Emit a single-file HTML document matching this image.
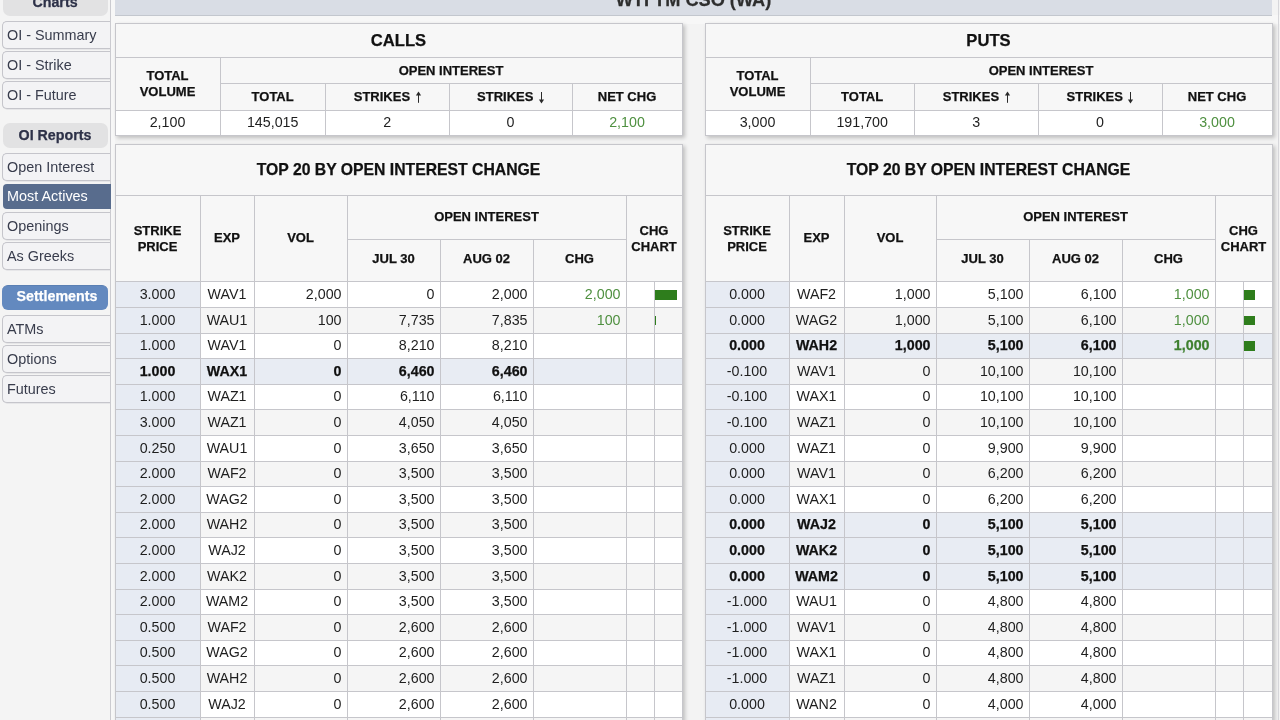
<!DOCTYPE html><html><head><meta charset="utf-8"><style>*{margin:0;padding:0;box-sizing:border-box}
html,body{width:1280px;height:720px;overflow:hidden;background:#f3f3f3;font-family:"Liberation Sans",sans-serif;color:#1e1e1e;position:relative}
body>div{position:absolute}
.t{display:flex;align-items:center;white-space:nowrap;line-height:1}
#w{position:absolute;left:0;top:0;width:1280px;height:720px;will-change:transform}
#w>div{position:absolute}
</style></head><body><div id="w">
<div style="left:0px;top:0px;width:110px;height:720px;background:#f4f4f4"></div>
<div style="left:111px;top:0px;width:4px;height:720px;background:#f7f7f7"></div>
<div style="left:110px;top:0px;width:1px;height:720px;background:#cbcbd0"></div>
<div style="left:2.5px;top:-14px;width:105px;height:30px;background:#e2e2e3;border-radius:7px"></div>
<div class="t" style="left:2.5px;top:-14px;width:105.0px;height:30px;font-size:14.25px;font-weight:bold;-webkit-text-stroke:0.25px currentColor;color:#2d3148;justify-content:center;align-items:flex-end;padding-bottom:7px;">Charts</div>
<div style="left:2px;top:21px;width:108px;height:28px;background:#f3f3f5;border:1px solid #c5c5cb;border-right:none;border-radius:5px 0 0 5px;box-shadow:0 0.5px 0 #d8d8dc"></div>
<div class="t" style="left:7px;top:21px;width:103px;height:27.5px;font-size:14.4px;color:#383c4c;justify-content:flex-start;">OI - Summary</div>
<div style="left:2px;top:51px;width:108px;height:28px;background:#f3f3f5;border:1px solid #c5c5cb;border-right:none;border-radius:5px 0 0 5px;box-shadow:0 0.5px 0 #d8d8dc"></div>
<div class="t" style="left:7px;top:51px;width:103px;height:27.5px;font-size:14.4px;color:#383c4c;justify-content:flex-start;">OI - Strike</div>
<div style="left:2px;top:81px;width:108px;height:28px;background:#f3f3f5;border:1px solid #c5c5cb;border-right:none;border-radius:5px 0 0 5px;box-shadow:0 0.5px 0 #d8d8dc"></div>
<div class="t" style="left:7px;top:81px;width:103px;height:27.5px;font-size:14.4px;color:#383c4c;justify-content:flex-start;">OI - Future</div>
<div style="left:2.5px;top:123px;width:105px;height:24.5px;background:#e2e2e3;border-radius:7px"></div>
<div class="t" style="left:2.5px;top:122.5px;width:105.0px;height:24.5px;font-size:14.25px;font-weight:bold;-webkit-text-stroke:0.25px currentColor;color:#2d3148;justify-content:center;">OI Reports</div>
<div style="left:2px;top:153px;width:108px;height:28px;background:#f3f3f5;border:1px solid #c5c5cb;border-right:none;border-radius:5px 0 0 5px;box-shadow:0 0.5px 0 #d8d8dc"></div>
<div class="t" style="left:7px;top:153px;width:103px;height:27.5px;font-size:14.4px;color:#383c4c;justify-content:flex-start;">Open Interest</div>
<div style="left:2px;top:212px;width:108px;height:28px;background:#f3f3f5;border:1px solid #c5c5cb;border-right:none;border-radius:5px 0 0 5px;box-shadow:0 0.5px 0 #d8d8dc"></div>
<div class="t" style="left:7px;top:212px;width:103px;height:27.5px;font-size:14.4px;color:#383c4c;justify-content:flex-start;">Openings</div>
<div style="left:2px;top:242px;width:108px;height:28px;background:#f3f3f5;border:1px solid #c5c5cb;border-right:none;border-radius:5px 0 0 5px;box-shadow:0 0.5px 0 #d8d8dc"></div>
<div class="t" style="left:7px;top:242px;width:103px;height:27.5px;font-size:14.4px;color:#383c4c;justify-content:flex-start;">As Greeks</div>
<div style="left:3px;top:184px;width:108px;height:25px;background:#586c8d;border-radius:4px 0 0 4px"></div>
<div class="t" style="left:7px;top:184px;width:104px;height:25px;font-size:14.4px;color:#ffffff;justify-content:flex-start;">Most Actives</div>
<div style="left:2px;top:284.5px;width:106px;height:25.5px;background:#6389bf;border-radius:6px;border-top:1px solid #5a7fb3"></div>
<div class="t" style="left:4px;top:283.7px;width:106px;height:25.5px;font-size:14.25px;font-weight:bold;-webkit-text-stroke:0.25px currentColor;color:#ffffff;justify-content:center;">Settlements</div>
<div style="left:2px;top:315px;width:108px;height:28px;background:#f3f3f5;border:1px solid #c5c5cb;border-right:none;border-radius:5px 0 0 5px;box-shadow:0 0.5px 0 #d8d8dc"></div>
<div class="t" style="left:7px;top:315px;width:103px;height:27.5px;font-size:14.4px;color:#383c4c;justify-content:flex-start;">ATMs</div>
<div style="left:2px;top:345px;width:108px;height:28px;background:#f3f3f5;border:1px solid #c5c5cb;border-right:none;border-radius:5px 0 0 5px;box-shadow:0 0.5px 0 #d8d8dc"></div>
<div class="t" style="left:7px;top:345px;width:103px;height:27.5px;font-size:14.4px;color:#383c4c;justify-content:flex-start;">Options</div>
<div style="left:2px;top:375px;width:108px;height:28px;background:#f3f3f5;border:1px solid #c5c5cb;border-right:none;border-radius:5px 0 0 5px;box-shadow:0 0.5px 0 #d8d8dc"></div>
<div class="t" style="left:7px;top:375px;width:103px;height:27.5px;font-size:14.4px;color:#383c4c;justify-content:flex-start;">Futures</div>
<div style="left:111px;top:15px;width:1169px;height:8.5px;background:#f7f7f7"></div>
<div style="left:115px;top:-20px;width:1157px;height:35.5px;background:#d9dde5;border-bottom:1px solid #c3c7ce"></div>
<div class="t" style="left:115px;top:-20px;width:1157px;height:34.5px;font-size:18.2px;font-weight:bold;-webkit-text-stroke:0.25px currentColor;color:#2e2e2e;justify-content:center;align-items:flex-end;padding-bottom:5px;">WTI TM CSO (WA)</div>
<div style="left:115px;top:23px;width:568px;height:113px;background:#f7f7f7;border:1px solid #c6c6cb;box-shadow:2px 2px 4px rgba(0,0,0,0.22)"></div>
<div style="left:116px;top:111px;width:566px;height:24px;background:#fff"></div>
<div style="left:115px;top:57px;width:567px;height:1px;background:#c6c6cb"></div>
<div style="left:220px;top:83.2px;width:462px;height:1px;background:#c6c6cb"></div>
<div style="left:115px;top:110px;width:567px;height:1px;background:#c6c6cb"></div>
<div style="left:220px;top:57px;width:1px;height:78px;background:#c6c6cb"></div>
<div style="left:325.3px;top:83.2px;width:1px;height:51.8px;background:#c6c6cb"></div>
<div style="left:449px;top:83.2px;width:1px;height:51.8px;background:#c6c6cb"></div>
<div style="left:572px;top:83.2px;width:1px;height:51.8px;background:#c6c6cb"></div>
<div class="t" style="left:115px;top:25px;width:567px;height:33px;font-size:16.6px;font-weight:bold;-webkit-text-stroke:0.25px currentColor;color:#111;justify-content:center;">CALLS</div>
<div class="t" style="left:115px;top:57px;width:105px;height:53px;font-size:13px;font-weight:bold;-webkit-text-stroke:0.25px currentColor;color:#111;justify-content:center;line-height:16px;text-align:center;">TOTAL<br>VOLUME</div>
<div class="t" style="left:220px;top:57.3px;width:462px;height:26.200000000000003px;font-size:13px;font-weight:bold;-webkit-text-stroke:0.25px currentColor;color:#111;justify-content:center;">OPEN INTEREST</div>
<div class="t" style="left:220px;top:83.0px;width:105.30000000000001px;height:26.799999999999997px;font-size:13px;font-weight:bold;-webkit-text-stroke:0.25px currentColor;color:#111;justify-content:center;">TOTAL</div>
<div class="t" style="left:325.3px;top:83.0px;width:123.69999999999999px;height:26.799999999999997px;font-size:13px;font-weight:bold;-webkit-text-stroke:0.25px currentColor;color:#111;justify-content:center;">STRIKES<svg width="5" height="12" viewBox="0 0 5 12" style="margin-left:5.5px;margin-top:2px;overflow:visible"><path d="M2.5 11.8V2" stroke="#2a2a2a" stroke-width="1" fill="none"/><path d="M-0.1 4.6L2.5 0.5L5.1 4.6Z" fill="#2a2a2a"/></svg></div>
<div class="t" style="left:449px;top:83.0px;width:123px;height:26.799999999999997px;font-size:13px;font-weight:bold;-webkit-text-stroke:0.25px currentColor;color:#111;justify-content:center;">STRIKES<svg width="5" height="12" viewBox="0 0 5 12" style="margin-left:5.5px;margin-top:2.5px;overflow:visible"><path d="M2.5 0V9.5" stroke="#2a2a2a" stroke-width="1" fill="none"/><path d="M-0.1 7.4L2.5 11.5L5.1 7.4Z" fill="#2a2a2a"/></svg></div>
<div class="t" style="left:572px;top:83.0px;width:110px;height:26.799999999999997px;font-size:13px;font-weight:bold;-webkit-text-stroke:0.25px currentColor;color:#111;justify-content:center;">NET CHG</div>
<div class="t" style="left:115px;top:110px;width:105px;height:25px;font-size:14.25px;color:#1e1e1e;justify-content:center;">2,100</div>
<div class="t" style="left:220px;top:110px;width:105.30000000000001px;height:25px;font-size:14.25px;color:#1e1e1e;justify-content:center;">145,015</div>
<div class="t" style="left:325.3px;top:110px;width:123.69999999999999px;height:25px;font-size:14.25px;color:#1e1e1e;justify-content:center;">2</div>
<div class="t" style="left:449px;top:110px;width:123px;height:25px;font-size:14.25px;color:#1e1e1e;justify-content:center;">0</div>
<div class="t" style="left:572px;top:110px;width:110px;height:25px;font-size:14.25px;color:#4f9040;justify-content:center;">2,100</div>
<div style="left:705px;top:23px;width:568px;height:113px;background:#f7f7f7;border:1px solid #c6c6cb;box-shadow:2px 2px 4px rgba(0,0,0,0.22)"></div>
<div style="left:706px;top:111px;width:566px;height:24px;background:#fff"></div>
<div style="left:705px;top:57px;width:567px;height:1px;background:#c6c6cb"></div>
<div style="left:810px;top:83.2px;width:462px;height:1px;background:#c6c6cb"></div>
<div style="left:705px;top:110px;width:567px;height:1px;background:#c6c6cb"></div>
<div style="left:810px;top:57px;width:1px;height:78px;background:#c6c6cb"></div>
<div style="left:914.3px;top:83.2px;width:1px;height:51.8px;background:#c6c6cb"></div>
<div style="left:1038px;top:83.2px;width:1px;height:51.8px;background:#c6c6cb"></div>
<div style="left:1162px;top:83.2px;width:1px;height:51.8px;background:#c6c6cb"></div>
<div class="t" style="left:705px;top:25px;width:567px;height:33px;font-size:16.6px;font-weight:bold;-webkit-text-stroke:0.25px currentColor;color:#111;justify-content:center;">PUTS</div>
<div class="t" style="left:705px;top:57px;width:105px;height:53px;font-size:13px;font-weight:bold;-webkit-text-stroke:0.25px currentColor;color:#111;justify-content:center;line-height:16px;text-align:center;">TOTAL<br>VOLUME</div>
<div class="t" style="left:810px;top:57.3px;width:462px;height:26.200000000000003px;font-size:13px;font-weight:bold;-webkit-text-stroke:0.25px currentColor;color:#111;justify-content:center;">OPEN INTEREST</div>
<div class="t" style="left:810px;top:83.0px;width:104.29999999999995px;height:26.799999999999997px;font-size:13px;font-weight:bold;-webkit-text-stroke:0.25px currentColor;color:#111;justify-content:center;">TOTAL</div>
<div class="t" style="left:914.3px;top:83.0px;width:123.70000000000005px;height:26.799999999999997px;font-size:13px;font-weight:bold;-webkit-text-stroke:0.25px currentColor;color:#111;justify-content:center;">STRIKES<svg width="5" height="12" viewBox="0 0 5 12" style="margin-left:5.5px;margin-top:2px;overflow:visible"><path d="M2.5 11.8V2" stroke="#2a2a2a" stroke-width="1" fill="none"/><path d="M-0.1 4.6L2.5 0.5L5.1 4.6Z" fill="#2a2a2a"/></svg></div>
<div class="t" style="left:1038px;top:83.0px;width:124px;height:26.799999999999997px;font-size:13px;font-weight:bold;-webkit-text-stroke:0.25px currentColor;color:#111;justify-content:center;">STRIKES<svg width="5" height="12" viewBox="0 0 5 12" style="margin-left:5.5px;margin-top:2.5px;overflow:visible"><path d="M2.5 0V9.5" stroke="#2a2a2a" stroke-width="1" fill="none"/><path d="M-0.1 7.4L2.5 11.5L5.1 7.4Z" fill="#2a2a2a"/></svg></div>
<div class="t" style="left:1162px;top:83.0px;width:110px;height:26.799999999999997px;font-size:13px;font-weight:bold;-webkit-text-stroke:0.25px currentColor;color:#111;justify-content:center;">NET CHG</div>
<div class="t" style="left:705px;top:110px;width:105px;height:25px;font-size:14.25px;color:#1e1e1e;justify-content:center;">3,000</div>
<div class="t" style="left:810px;top:110px;width:104.29999999999995px;height:25px;font-size:14.25px;color:#1e1e1e;justify-content:center;">191,700</div>
<div class="t" style="left:914.3px;top:110px;width:123.70000000000005px;height:25px;font-size:14.25px;color:#1e1e1e;justify-content:center;">3</div>
<div class="t" style="left:1038px;top:110px;width:124px;height:25px;font-size:14.25px;color:#1e1e1e;justify-content:center;">0</div>
<div class="t" style="left:1162px;top:110px;width:110px;height:25px;font-size:14.25px;color:#4f9040;justify-content:center;">3,000</div>
<div style="left:115px;top:144px;width:568px;height:596px;background:#f7f7f7;border:1px solid #c6c6cb;box-shadow:2px 2px 4px rgba(0,0,0,0.22)"></div>
<div style="left:116px;top:281.4px;width:566px;height:25.600000000000023px;background:#ffffff"></div>
<div style="left:116px;top:281.4px;width:84px;height:25.600000000000023px;background:#e7ebf3"></div>
<div style="left:116px;top:307.0px;width:566px;height:25.599999999999966px;background:#f5f5f5"></div>
<div style="left:116px;top:307.0px;width:84px;height:25.599999999999966px;background:#e7ebf3"></div>
<div style="left:116px;top:332.59999999999997px;width:566px;height:25.600000000000023px;background:#ffffff"></div>
<div style="left:116px;top:332.59999999999997px;width:84px;height:25.600000000000023px;background:#e7ebf3"></div>
<div style="left:116px;top:358.2px;width:566px;height:25.599999999999966px;background:#e8ecf3"></div>
<div style="left:116px;top:383.79999999999995px;width:566px;height:25.600000000000023px;background:#ffffff"></div>
<div style="left:116px;top:383.79999999999995px;width:84px;height:25.600000000000023px;background:#e7ebf3"></div>
<div style="left:116px;top:409.4px;width:566px;height:25.600000000000023px;background:#f5f5f5"></div>
<div style="left:116px;top:409.4px;width:84px;height:25.600000000000023px;background:#e7ebf3"></div>
<div style="left:116px;top:435.0px;width:566px;height:25.600000000000023px;background:#ffffff"></div>
<div style="left:116px;top:435.0px;width:84px;height:25.600000000000023px;background:#e7ebf3"></div>
<div style="left:116px;top:460.6px;width:566px;height:25.599999999999966px;background:#f5f5f5"></div>
<div style="left:116px;top:460.6px;width:84px;height:25.599999999999966px;background:#e7ebf3"></div>
<div style="left:116px;top:486.2px;width:566px;height:25.599999999999966px;background:#ffffff"></div>
<div style="left:116px;top:486.2px;width:84px;height:25.599999999999966px;background:#e7ebf3"></div>
<div style="left:116px;top:511.79999999999995px;width:566px;height:25.600000000000023px;background:#f5f5f5"></div>
<div style="left:116px;top:511.79999999999995px;width:84px;height:25.600000000000023px;background:#e7ebf3"></div>
<div style="left:116px;top:537.4px;width:566px;height:25.600000000000023px;background:#ffffff"></div>
<div style="left:116px;top:537.4px;width:84px;height:25.600000000000023px;background:#e7ebf3"></div>
<div style="left:116px;top:563.0px;width:566px;height:25.600000000000023px;background:#f5f5f5"></div>
<div style="left:116px;top:563.0px;width:84px;height:25.600000000000023px;background:#e7ebf3"></div>
<div style="left:116px;top:588.6px;width:566px;height:25.600000000000023px;background:#ffffff"></div>
<div style="left:116px;top:588.6px;width:84px;height:25.600000000000023px;background:#e7ebf3"></div>
<div style="left:116px;top:614.2px;width:566px;height:25.59999999999991px;background:#f5f5f5"></div>
<div style="left:116px;top:614.2px;width:84px;height:25.59999999999991px;background:#e7ebf3"></div>
<div style="left:116px;top:639.8px;width:566px;height:25.600000000000023px;background:#ffffff"></div>
<div style="left:116px;top:639.8px;width:84px;height:25.600000000000023px;background:#e7ebf3"></div>
<div style="left:116px;top:665.4px;width:566px;height:25.600000000000023px;background:#f5f5f5"></div>
<div style="left:116px;top:665.4px;width:84px;height:25.600000000000023px;background:#e7ebf3"></div>
<div style="left:116px;top:691.0px;width:566px;height:25.600000000000023px;background:#ffffff"></div>
<div style="left:116px;top:691.0px;width:84px;height:25.600000000000023px;background:#e7ebf3"></div>
<div style="left:116px;top:716.6px;width:566px;height:25.600000000000023px;background:#f5f5f5"></div>
<div style="left:116px;top:716.6px;width:84px;height:25.600000000000023px;background:#e7ebf3"></div>
<div style="left:115px;top:195px;width:567px;height:1px;background:#c6c6cb"></div>
<div style="left:347px;top:238.6px;width:279px;height:1px;background:#c6c6cb"></div>
<div style="left:115px;top:281.4px;width:567px;height:1px;background:#c6c6cb"></div>
<div style="left:115px;top:307.0px;width:567px;height:1px;background:#c6c6cb"></div>
<div style="left:115px;top:332.59999999999997px;width:567px;height:1px;background:#c6c6cb"></div>
<div style="left:115px;top:358.2px;width:567px;height:1px;background:#c6c6cb"></div>
<div style="left:115px;top:383.79999999999995px;width:567px;height:1px;background:#c6c6cb"></div>
<div style="left:115px;top:409.4px;width:567px;height:1px;background:#c6c6cb"></div>
<div style="left:115px;top:435.0px;width:567px;height:1px;background:#c6c6cb"></div>
<div style="left:115px;top:460.6px;width:567px;height:1px;background:#c6c6cb"></div>
<div style="left:115px;top:486.2px;width:567px;height:1px;background:#c6c6cb"></div>
<div style="left:115px;top:511.79999999999995px;width:567px;height:1px;background:#c6c6cb"></div>
<div style="left:115px;top:537.4px;width:567px;height:1px;background:#c6c6cb"></div>
<div style="left:115px;top:563.0px;width:567px;height:1px;background:#c6c6cb"></div>
<div style="left:115px;top:588.6px;width:567px;height:1px;background:#c6c6cb"></div>
<div style="left:115px;top:614.2px;width:567px;height:1px;background:#c6c6cb"></div>
<div style="left:115px;top:639.8px;width:567px;height:1px;background:#c6c6cb"></div>
<div style="left:115px;top:665.4px;width:567px;height:1px;background:#c6c6cb"></div>
<div style="left:115px;top:691.0px;width:567px;height:1px;background:#c6c6cb"></div>
<div style="left:115px;top:716.6px;width:567px;height:1px;background:#c6c6cb"></div>
<div style="left:115px;top:742.2px;width:567px;height:1px;background:#c6c6cb"></div>
<div style="left:200px;top:195px;width:1px;height:545px;background:#c6c6cb"></div>
<div style="left:254px;top:195px;width:1px;height:545px;background:#c6c6cb"></div>
<div style="left:347px;top:195px;width:1px;height:545px;background:#c6c6cb"></div>
<div style="left:440px;top:238.6px;width:1px;height:501.4px;background:#c6c6cb"></div>
<div style="left:533px;top:238.6px;width:1px;height:501.4px;background:#c6c6cb"></div>
<div style="left:626px;top:195px;width:1px;height:545px;background:#c6c6cb"></div>
<div style="left:654px;top:281px;width:1px;height:459px;background:#c6c6cb"></div>
<div class="t" style="left:115px;top:144px;width:567px;height:51px;font-size:15.75px;font-weight:bold;-webkit-text-stroke:0.25px currentColor;color:#111;justify-content:center;">TOP 20 BY OPEN INTEREST CHANGE</div>
<div class="t" style="left:115px;top:195.5px;width:85px;height:86.0px;font-size:13px;font-weight:bold;-webkit-text-stroke:0.25px currentColor;color:#111;justify-content:center;line-height:16px;text-align:center;">STRIKE<br>PRICE</div>
<div class="t" style="left:200px;top:195px;width:54px;height:86px;font-size:13px;font-weight:bold;-webkit-text-stroke:0.25px currentColor;color:#111;justify-content:center;line-height:16px;text-align:center;">EXP</div>
<div class="t" style="left:254px;top:195px;width:93px;height:86px;font-size:13px;font-weight:bold;-webkit-text-stroke:0.25px currentColor;color:#111;justify-content:center;line-height:16px;text-align:center;">VOL</div>
<div class="t" style="left:347px;top:195px;width:279px;height:43.599999999999994px;font-size:13px;font-weight:bold;-webkit-text-stroke:0.25px currentColor;color:#111;justify-content:center;line-height:16px;text-align:center;">OPEN INTEREST</div>
<div class="t" style="left:347px;top:237.6px;width:93px;height:42.400000000000006px;font-size:13px;font-weight:bold;-webkit-text-stroke:0.25px currentColor;color:#111;justify-content:center;line-height:16px;text-align:center;">JUL 30</div>
<div class="t" style="left:440px;top:237.6px;width:93px;height:42.400000000000006px;font-size:13px;font-weight:bold;-webkit-text-stroke:0.25px currentColor;color:#111;justify-content:center;line-height:16px;text-align:center;">AUG 02</div>
<div class="t" style="left:533px;top:237.6px;width:93px;height:42.400000000000006px;font-size:13px;font-weight:bold;-webkit-text-stroke:0.25px currentColor;color:#111;justify-content:center;line-height:16px;text-align:center;">CHG</div>
<div class="t" style="left:626px;top:196px;width:56px;height:86px;font-size:13px;font-weight:bold;-webkit-text-stroke:0.25px currentColor;color:#111;justify-content:center;line-height:16px;text-align:center;">CHG<br>CHART</div>
<div class="t" style="left:115px;top:281.4px;width:85px;height:25.600000000000023px;font-size:14.25px;color:#1e1e1e;justify-content:center;">3.000</div>
<div class="t" style="left:200px;top:281.4px;width:54px;height:25.600000000000023px;font-size:14.25px;color:#1e1e1e;justify-content:center;">WAV1</div>
<div class="t" style="left:254px;top:281.4px;width:93px;height:25.600000000000023px;font-size:14.25px;color:#1e1e1e;justify-content:flex-end;padding-right:5.5px;">2,000</div>
<div class="t" style="left:347px;top:281.4px;width:93px;height:25.600000000000023px;font-size:14.25px;color:#1e1e1e;justify-content:flex-end;padding-right:5.5px;">0</div>
<div class="t" style="left:440px;top:281.4px;width:93px;height:25.600000000000023px;font-size:14.25px;color:#1e1e1e;justify-content:flex-end;padding-right:5.5px;">2,000</div>
<div class="t" style="left:533px;top:281.4px;width:93px;height:25.600000000000023px;font-size:14.25px;color:#4f9040;justify-content:flex-end;padding-right:5.5px;">2,000</div>
<div style="left:655px;top:290.09999999999997px;width:22px;height:9.8px;background:#2e7d1c"></div>
<div class="t" style="left:115px;top:307.0px;width:85px;height:25.599999999999966px;font-size:14.25px;color:#1e1e1e;justify-content:center;">1.000</div>
<div class="t" style="left:200px;top:307.0px;width:54px;height:25.599999999999966px;font-size:14.25px;color:#1e1e1e;justify-content:center;">WAU1</div>
<div class="t" style="left:254px;top:307.0px;width:93px;height:25.599999999999966px;font-size:14.25px;color:#1e1e1e;justify-content:flex-end;padding-right:5.5px;">100</div>
<div class="t" style="left:347px;top:307.0px;width:93px;height:25.599999999999966px;font-size:14.25px;color:#1e1e1e;justify-content:flex-end;padding-right:5.5px;">7,735</div>
<div class="t" style="left:440px;top:307.0px;width:93px;height:25.599999999999966px;font-size:14.25px;color:#1e1e1e;justify-content:flex-end;padding-right:5.5px;">7,835</div>
<div class="t" style="left:533px;top:307.0px;width:93px;height:25.599999999999966px;font-size:14.25px;color:#4f9040;justify-content:flex-end;padding-right:5.5px;">100</div>
<div style="left:655px;top:315.7px;width:1px;height:9.8px;background:#2e7d1c"></div>
<div class="t" style="left:115px;top:332.59999999999997px;width:85px;height:25.600000000000023px;font-size:14.25px;color:#1e1e1e;justify-content:center;">1.000</div>
<div class="t" style="left:200px;top:332.59999999999997px;width:54px;height:25.600000000000023px;font-size:14.25px;color:#1e1e1e;justify-content:center;">WAV1</div>
<div class="t" style="left:254px;top:332.59999999999997px;width:93px;height:25.600000000000023px;font-size:14.25px;color:#1e1e1e;justify-content:flex-end;padding-right:5.5px;">0</div>
<div class="t" style="left:347px;top:332.59999999999997px;width:93px;height:25.600000000000023px;font-size:14.25px;color:#1e1e1e;justify-content:flex-end;padding-right:5.5px;">8,210</div>
<div class="t" style="left:440px;top:332.59999999999997px;width:93px;height:25.600000000000023px;font-size:14.25px;color:#1e1e1e;justify-content:flex-end;padding-right:5.5px;">8,210</div>
<div class="t" style="left:115px;top:358.2px;width:85px;height:25.599999999999966px;font-size:14.25px;font-weight:bold;-webkit-text-stroke:0.25px currentColor;color:#111;justify-content:center;">1.000</div>
<div class="t" style="left:200px;top:358.2px;width:54px;height:25.599999999999966px;font-size:14.25px;font-weight:bold;-webkit-text-stroke:0.25px currentColor;color:#111;justify-content:center;">WAX1</div>
<div class="t" style="left:254px;top:358.2px;width:93px;height:25.599999999999966px;font-size:14.25px;font-weight:bold;-webkit-text-stroke:0.25px currentColor;color:#111;justify-content:flex-end;padding-right:5.5px;">0</div>
<div class="t" style="left:347px;top:358.2px;width:93px;height:25.599999999999966px;font-size:14.25px;font-weight:bold;-webkit-text-stroke:0.25px currentColor;color:#111;justify-content:flex-end;padding-right:5.5px;">6,460</div>
<div class="t" style="left:440px;top:358.2px;width:93px;height:25.599999999999966px;font-size:14.25px;font-weight:bold;-webkit-text-stroke:0.25px currentColor;color:#111;justify-content:flex-end;padding-right:5.5px;">6,460</div>
<div class="t" style="left:115px;top:383.79999999999995px;width:85px;height:25.600000000000023px;font-size:14.25px;color:#1e1e1e;justify-content:center;">1.000</div>
<div class="t" style="left:200px;top:383.79999999999995px;width:54px;height:25.600000000000023px;font-size:14.25px;color:#1e1e1e;justify-content:center;">WAZ1</div>
<div class="t" style="left:254px;top:383.79999999999995px;width:93px;height:25.600000000000023px;font-size:14.25px;color:#1e1e1e;justify-content:flex-end;padding-right:5.5px;">0</div>
<div class="t" style="left:347px;top:383.79999999999995px;width:93px;height:25.600000000000023px;font-size:14.25px;color:#1e1e1e;justify-content:flex-end;padding-right:5.5px;">6,110</div>
<div class="t" style="left:440px;top:383.79999999999995px;width:93px;height:25.600000000000023px;font-size:14.25px;color:#1e1e1e;justify-content:flex-end;padding-right:5.5px;">6,110</div>
<div class="t" style="left:115px;top:409.4px;width:85px;height:25.600000000000023px;font-size:14.25px;color:#1e1e1e;justify-content:center;">3.000</div>
<div class="t" style="left:200px;top:409.4px;width:54px;height:25.600000000000023px;font-size:14.25px;color:#1e1e1e;justify-content:center;">WAZ1</div>
<div class="t" style="left:254px;top:409.4px;width:93px;height:25.600000000000023px;font-size:14.25px;color:#1e1e1e;justify-content:flex-end;padding-right:5.5px;">0</div>
<div class="t" style="left:347px;top:409.4px;width:93px;height:25.600000000000023px;font-size:14.25px;color:#1e1e1e;justify-content:flex-end;padding-right:5.5px;">4,050</div>
<div class="t" style="left:440px;top:409.4px;width:93px;height:25.600000000000023px;font-size:14.25px;color:#1e1e1e;justify-content:flex-end;padding-right:5.5px;">4,050</div>
<div class="t" style="left:115px;top:435.0px;width:85px;height:25.600000000000023px;font-size:14.25px;color:#1e1e1e;justify-content:center;">0.250</div>
<div class="t" style="left:200px;top:435.0px;width:54px;height:25.600000000000023px;font-size:14.25px;color:#1e1e1e;justify-content:center;">WAU1</div>
<div class="t" style="left:254px;top:435.0px;width:93px;height:25.600000000000023px;font-size:14.25px;color:#1e1e1e;justify-content:flex-end;padding-right:5.5px;">0</div>
<div class="t" style="left:347px;top:435.0px;width:93px;height:25.600000000000023px;font-size:14.25px;color:#1e1e1e;justify-content:flex-end;padding-right:5.5px;">3,650</div>
<div class="t" style="left:440px;top:435.0px;width:93px;height:25.600000000000023px;font-size:14.25px;color:#1e1e1e;justify-content:flex-end;padding-right:5.5px;">3,650</div>
<div class="t" style="left:115px;top:460.6px;width:85px;height:25.599999999999966px;font-size:14.25px;color:#1e1e1e;justify-content:center;">2.000</div>
<div class="t" style="left:200px;top:460.6px;width:54px;height:25.599999999999966px;font-size:14.25px;color:#1e1e1e;justify-content:center;">WAF2</div>
<div class="t" style="left:254px;top:460.6px;width:93px;height:25.599999999999966px;font-size:14.25px;color:#1e1e1e;justify-content:flex-end;padding-right:5.5px;">0</div>
<div class="t" style="left:347px;top:460.6px;width:93px;height:25.599999999999966px;font-size:14.25px;color:#1e1e1e;justify-content:flex-end;padding-right:5.5px;">3,500</div>
<div class="t" style="left:440px;top:460.6px;width:93px;height:25.599999999999966px;font-size:14.25px;color:#1e1e1e;justify-content:flex-end;padding-right:5.5px;">3,500</div>
<div class="t" style="left:115px;top:486.2px;width:85px;height:25.599999999999966px;font-size:14.25px;color:#1e1e1e;justify-content:center;">2.000</div>
<div class="t" style="left:200px;top:486.2px;width:54px;height:25.599999999999966px;font-size:14.25px;color:#1e1e1e;justify-content:center;">WAG2</div>
<div class="t" style="left:254px;top:486.2px;width:93px;height:25.599999999999966px;font-size:14.25px;color:#1e1e1e;justify-content:flex-end;padding-right:5.5px;">0</div>
<div class="t" style="left:347px;top:486.2px;width:93px;height:25.599999999999966px;font-size:14.25px;color:#1e1e1e;justify-content:flex-end;padding-right:5.5px;">3,500</div>
<div class="t" style="left:440px;top:486.2px;width:93px;height:25.599999999999966px;font-size:14.25px;color:#1e1e1e;justify-content:flex-end;padding-right:5.5px;">3,500</div>
<div class="t" style="left:115px;top:511.79999999999995px;width:85px;height:25.600000000000023px;font-size:14.25px;color:#1e1e1e;justify-content:center;">2.000</div>
<div class="t" style="left:200px;top:511.79999999999995px;width:54px;height:25.600000000000023px;font-size:14.25px;color:#1e1e1e;justify-content:center;">WAH2</div>
<div class="t" style="left:254px;top:511.79999999999995px;width:93px;height:25.600000000000023px;font-size:14.25px;color:#1e1e1e;justify-content:flex-end;padding-right:5.5px;">0</div>
<div class="t" style="left:347px;top:511.79999999999995px;width:93px;height:25.600000000000023px;font-size:14.25px;color:#1e1e1e;justify-content:flex-end;padding-right:5.5px;">3,500</div>
<div class="t" style="left:440px;top:511.79999999999995px;width:93px;height:25.600000000000023px;font-size:14.25px;color:#1e1e1e;justify-content:flex-end;padding-right:5.5px;">3,500</div>
<div class="t" style="left:115px;top:537.4px;width:85px;height:25.600000000000023px;font-size:14.25px;color:#1e1e1e;justify-content:center;">2.000</div>
<div class="t" style="left:200px;top:537.4px;width:54px;height:25.600000000000023px;font-size:14.25px;color:#1e1e1e;justify-content:center;">WAJ2</div>
<div class="t" style="left:254px;top:537.4px;width:93px;height:25.600000000000023px;font-size:14.25px;color:#1e1e1e;justify-content:flex-end;padding-right:5.5px;">0</div>
<div class="t" style="left:347px;top:537.4px;width:93px;height:25.600000000000023px;font-size:14.25px;color:#1e1e1e;justify-content:flex-end;padding-right:5.5px;">3,500</div>
<div class="t" style="left:440px;top:537.4px;width:93px;height:25.600000000000023px;font-size:14.25px;color:#1e1e1e;justify-content:flex-end;padding-right:5.5px;">3,500</div>
<div class="t" style="left:115px;top:563.0px;width:85px;height:25.600000000000023px;font-size:14.25px;color:#1e1e1e;justify-content:center;">2.000</div>
<div class="t" style="left:200px;top:563.0px;width:54px;height:25.600000000000023px;font-size:14.25px;color:#1e1e1e;justify-content:center;">WAK2</div>
<div class="t" style="left:254px;top:563.0px;width:93px;height:25.600000000000023px;font-size:14.25px;color:#1e1e1e;justify-content:flex-end;padding-right:5.5px;">0</div>
<div class="t" style="left:347px;top:563.0px;width:93px;height:25.600000000000023px;font-size:14.25px;color:#1e1e1e;justify-content:flex-end;padding-right:5.5px;">3,500</div>
<div class="t" style="left:440px;top:563.0px;width:93px;height:25.600000000000023px;font-size:14.25px;color:#1e1e1e;justify-content:flex-end;padding-right:5.5px;">3,500</div>
<div class="t" style="left:115px;top:588.6px;width:85px;height:25.600000000000023px;font-size:14.25px;color:#1e1e1e;justify-content:center;">2.000</div>
<div class="t" style="left:200px;top:588.6px;width:54px;height:25.600000000000023px;font-size:14.25px;color:#1e1e1e;justify-content:center;">WAM2</div>
<div class="t" style="left:254px;top:588.6px;width:93px;height:25.600000000000023px;font-size:14.25px;color:#1e1e1e;justify-content:flex-end;padding-right:5.5px;">0</div>
<div class="t" style="left:347px;top:588.6px;width:93px;height:25.600000000000023px;font-size:14.25px;color:#1e1e1e;justify-content:flex-end;padding-right:5.5px;">3,500</div>
<div class="t" style="left:440px;top:588.6px;width:93px;height:25.600000000000023px;font-size:14.25px;color:#1e1e1e;justify-content:flex-end;padding-right:5.5px;">3,500</div>
<div class="t" style="left:115px;top:614.2px;width:85px;height:25.59999999999991px;font-size:14.25px;color:#1e1e1e;justify-content:center;">0.500</div>
<div class="t" style="left:200px;top:614.2px;width:54px;height:25.59999999999991px;font-size:14.25px;color:#1e1e1e;justify-content:center;">WAF2</div>
<div class="t" style="left:254px;top:614.2px;width:93px;height:25.59999999999991px;font-size:14.25px;color:#1e1e1e;justify-content:flex-end;padding-right:5.5px;">0</div>
<div class="t" style="left:347px;top:614.2px;width:93px;height:25.59999999999991px;font-size:14.25px;color:#1e1e1e;justify-content:flex-end;padding-right:5.5px;">2,600</div>
<div class="t" style="left:440px;top:614.2px;width:93px;height:25.59999999999991px;font-size:14.25px;color:#1e1e1e;justify-content:flex-end;padding-right:5.5px;">2,600</div>
<div class="t" style="left:115px;top:639.8px;width:85px;height:25.600000000000023px;font-size:14.25px;color:#1e1e1e;justify-content:center;">0.500</div>
<div class="t" style="left:200px;top:639.8px;width:54px;height:25.600000000000023px;font-size:14.25px;color:#1e1e1e;justify-content:center;">WAG2</div>
<div class="t" style="left:254px;top:639.8px;width:93px;height:25.600000000000023px;font-size:14.25px;color:#1e1e1e;justify-content:flex-end;padding-right:5.5px;">0</div>
<div class="t" style="left:347px;top:639.8px;width:93px;height:25.600000000000023px;font-size:14.25px;color:#1e1e1e;justify-content:flex-end;padding-right:5.5px;">2,600</div>
<div class="t" style="left:440px;top:639.8px;width:93px;height:25.600000000000023px;font-size:14.25px;color:#1e1e1e;justify-content:flex-end;padding-right:5.5px;">2,600</div>
<div class="t" style="left:115px;top:665.4px;width:85px;height:25.600000000000023px;font-size:14.25px;color:#1e1e1e;justify-content:center;">0.500</div>
<div class="t" style="left:200px;top:665.4px;width:54px;height:25.600000000000023px;font-size:14.25px;color:#1e1e1e;justify-content:center;">WAH2</div>
<div class="t" style="left:254px;top:665.4px;width:93px;height:25.600000000000023px;font-size:14.25px;color:#1e1e1e;justify-content:flex-end;padding-right:5.5px;">0</div>
<div class="t" style="left:347px;top:665.4px;width:93px;height:25.600000000000023px;font-size:14.25px;color:#1e1e1e;justify-content:flex-end;padding-right:5.5px;">2,600</div>
<div class="t" style="left:440px;top:665.4px;width:93px;height:25.600000000000023px;font-size:14.25px;color:#1e1e1e;justify-content:flex-end;padding-right:5.5px;">2,600</div>
<div class="t" style="left:115px;top:691.0px;width:85px;height:25.600000000000023px;font-size:14.25px;color:#1e1e1e;justify-content:center;">0.500</div>
<div class="t" style="left:200px;top:691.0px;width:54px;height:25.600000000000023px;font-size:14.25px;color:#1e1e1e;justify-content:center;">WAJ2</div>
<div class="t" style="left:254px;top:691.0px;width:93px;height:25.600000000000023px;font-size:14.25px;color:#1e1e1e;justify-content:flex-end;padding-right:5.5px;">0</div>
<div class="t" style="left:347px;top:691.0px;width:93px;height:25.600000000000023px;font-size:14.25px;color:#1e1e1e;justify-content:flex-end;padding-right:5.5px;">2,600</div>
<div class="t" style="left:440px;top:691.0px;width:93px;height:25.600000000000023px;font-size:14.25px;color:#1e1e1e;justify-content:flex-end;padding-right:5.5px;">2,600</div>
<div class="t" style="left:115px;top:716.6px;width:85px;height:25.600000000000023px;font-size:14.25px;color:#1e1e1e;justify-content:center;">0.500</div>
<div class="t" style="left:200px;top:716.6px;width:54px;height:25.600000000000023px;font-size:14.25px;color:#1e1e1e;justify-content:center;">WAK2</div>
<div class="t" style="left:254px;top:716.6px;width:93px;height:25.600000000000023px;font-size:14.25px;color:#1e1e1e;justify-content:flex-end;padding-right:5.5px;">0</div>
<div class="t" style="left:347px;top:716.6px;width:93px;height:25.600000000000023px;font-size:14.25px;color:#1e1e1e;justify-content:flex-end;padding-right:5.5px;">2,600</div>
<div class="t" style="left:440px;top:716.6px;width:93px;height:25.600000000000023px;font-size:14.25px;color:#1e1e1e;justify-content:flex-end;padding-right:5.5px;">2,600</div>
<div style="left:705px;top:144px;width:568px;height:596px;background:#f7f7f7;border:1px solid #c6c6cb;box-shadow:2px 2px 4px rgba(0,0,0,0.22)"></div>
<div style="left:706px;top:281.4px;width:566px;height:25.600000000000023px;background:#ffffff"></div>
<div style="left:706px;top:281.4px;width:83px;height:25.600000000000023px;background:#e7ebf3"></div>
<div style="left:706px;top:307.0px;width:566px;height:25.599999999999966px;background:#f5f5f5"></div>
<div style="left:706px;top:307.0px;width:83px;height:25.599999999999966px;background:#e7ebf3"></div>
<div style="left:706px;top:332.59999999999997px;width:566px;height:25.600000000000023px;background:#e8ecf3"></div>
<div style="left:706px;top:358.2px;width:566px;height:25.599999999999966px;background:#f5f5f5"></div>
<div style="left:706px;top:358.2px;width:83px;height:25.599999999999966px;background:#e7ebf3"></div>
<div style="left:706px;top:383.79999999999995px;width:566px;height:25.600000000000023px;background:#ffffff"></div>
<div style="left:706px;top:383.79999999999995px;width:83px;height:25.600000000000023px;background:#e7ebf3"></div>
<div style="left:706px;top:409.4px;width:566px;height:25.600000000000023px;background:#f5f5f5"></div>
<div style="left:706px;top:409.4px;width:83px;height:25.600000000000023px;background:#e7ebf3"></div>
<div style="left:706px;top:435.0px;width:566px;height:25.600000000000023px;background:#ffffff"></div>
<div style="left:706px;top:435.0px;width:83px;height:25.600000000000023px;background:#e7ebf3"></div>
<div style="left:706px;top:460.6px;width:566px;height:25.599999999999966px;background:#f5f5f5"></div>
<div style="left:706px;top:460.6px;width:83px;height:25.599999999999966px;background:#e7ebf3"></div>
<div style="left:706px;top:486.2px;width:566px;height:25.599999999999966px;background:#ffffff"></div>
<div style="left:706px;top:486.2px;width:83px;height:25.599999999999966px;background:#e7ebf3"></div>
<div style="left:706px;top:511.79999999999995px;width:566px;height:25.600000000000023px;background:#e8ecf3"></div>
<div style="left:706px;top:537.4px;width:566px;height:25.600000000000023px;background:#e8ecf3"></div>
<div style="left:706px;top:563.0px;width:566px;height:25.600000000000023px;background:#e8ecf3"></div>
<div style="left:706px;top:588.6px;width:566px;height:25.600000000000023px;background:#ffffff"></div>
<div style="left:706px;top:588.6px;width:83px;height:25.600000000000023px;background:#e7ebf3"></div>
<div style="left:706px;top:614.2px;width:566px;height:25.59999999999991px;background:#f5f5f5"></div>
<div style="left:706px;top:614.2px;width:83px;height:25.59999999999991px;background:#e7ebf3"></div>
<div style="left:706px;top:639.8px;width:566px;height:25.600000000000023px;background:#ffffff"></div>
<div style="left:706px;top:639.8px;width:83px;height:25.600000000000023px;background:#e7ebf3"></div>
<div style="left:706px;top:665.4px;width:566px;height:25.600000000000023px;background:#f5f5f5"></div>
<div style="left:706px;top:665.4px;width:83px;height:25.600000000000023px;background:#e7ebf3"></div>
<div style="left:706px;top:691.0px;width:566px;height:25.600000000000023px;background:#ffffff"></div>
<div style="left:706px;top:691.0px;width:83px;height:25.600000000000023px;background:#e7ebf3"></div>
<div style="left:706px;top:716.6px;width:566px;height:25.600000000000023px;background:#f5f5f5"></div>
<div style="left:706px;top:716.6px;width:83px;height:25.600000000000023px;background:#e7ebf3"></div>
<div style="left:705px;top:195px;width:567px;height:1px;background:#c6c6cb"></div>
<div style="left:936px;top:238.6px;width:279px;height:1px;background:#c6c6cb"></div>
<div style="left:705px;top:281.4px;width:567px;height:1px;background:#c6c6cb"></div>
<div style="left:705px;top:307.0px;width:567px;height:1px;background:#c6c6cb"></div>
<div style="left:705px;top:332.59999999999997px;width:567px;height:1px;background:#c6c6cb"></div>
<div style="left:705px;top:358.2px;width:567px;height:1px;background:#c6c6cb"></div>
<div style="left:705px;top:383.79999999999995px;width:567px;height:1px;background:#c6c6cb"></div>
<div style="left:705px;top:409.4px;width:567px;height:1px;background:#c6c6cb"></div>
<div style="left:705px;top:435.0px;width:567px;height:1px;background:#c6c6cb"></div>
<div style="left:705px;top:460.6px;width:567px;height:1px;background:#c6c6cb"></div>
<div style="left:705px;top:486.2px;width:567px;height:1px;background:#c6c6cb"></div>
<div style="left:705px;top:511.79999999999995px;width:567px;height:1px;background:#c6c6cb"></div>
<div style="left:705px;top:537.4px;width:567px;height:1px;background:#c6c6cb"></div>
<div style="left:705px;top:563.0px;width:567px;height:1px;background:#c6c6cb"></div>
<div style="left:705px;top:588.6px;width:567px;height:1px;background:#c6c6cb"></div>
<div style="left:705px;top:614.2px;width:567px;height:1px;background:#c6c6cb"></div>
<div style="left:705px;top:639.8px;width:567px;height:1px;background:#c6c6cb"></div>
<div style="left:705px;top:665.4px;width:567px;height:1px;background:#c6c6cb"></div>
<div style="left:705px;top:691.0px;width:567px;height:1px;background:#c6c6cb"></div>
<div style="left:705px;top:716.6px;width:567px;height:1px;background:#c6c6cb"></div>
<div style="left:705px;top:742.2px;width:567px;height:1px;background:#c6c6cb"></div>
<div style="left:789px;top:195px;width:1px;height:545px;background:#c6c6cb"></div>
<div style="left:844px;top:195px;width:1px;height:545px;background:#c6c6cb"></div>
<div style="left:936px;top:195px;width:1px;height:545px;background:#c6c6cb"></div>
<div style="left:1029px;top:238.6px;width:1px;height:501.4px;background:#c6c6cb"></div>
<div style="left:1122px;top:238.6px;width:1px;height:501.4px;background:#c6c6cb"></div>
<div style="left:1215px;top:195px;width:1px;height:545px;background:#c6c6cb"></div>
<div style="left:1243px;top:281px;width:1px;height:459px;background:#c6c6cb"></div>
<div class="t" style="left:705px;top:144px;width:567px;height:51px;font-size:15.75px;font-weight:bold;-webkit-text-stroke:0.25px currentColor;color:#111;justify-content:center;">TOP 20 BY OPEN INTEREST CHANGE</div>
<div class="t" style="left:705px;top:195.5px;width:84px;height:86.0px;font-size:13px;font-weight:bold;-webkit-text-stroke:0.25px currentColor;color:#111;justify-content:center;line-height:16px;text-align:center;">STRIKE<br>PRICE</div>
<div class="t" style="left:789px;top:195px;width:55px;height:86px;font-size:13px;font-weight:bold;-webkit-text-stroke:0.25px currentColor;color:#111;justify-content:center;line-height:16px;text-align:center;">EXP</div>
<div class="t" style="left:844px;top:195px;width:92px;height:86px;font-size:13px;font-weight:bold;-webkit-text-stroke:0.25px currentColor;color:#111;justify-content:center;line-height:16px;text-align:center;">VOL</div>
<div class="t" style="left:936px;top:195px;width:279px;height:43.599999999999994px;font-size:13px;font-weight:bold;-webkit-text-stroke:0.25px currentColor;color:#111;justify-content:center;line-height:16px;text-align:center;">OPEN INTEREST</div>
<div class="t" style="left:936px;top:237.6px;width:93px;height:42.400000000000006px;font-size:13px;font-weight:bold;-webkit-text-stroke:0.25px currentColor;color:#111;justify-content:center;line-height:16px;text-align:center;">JUL 30</div>
<div class="t" style="left:1029px;top:237.6px;width:93px;height:42.400000000000006px;font-size:13px;font-weight:bold;-webkit-text-stroke:0.25px currentColor;color:#111;justify-content:center;line-height:16px;text-align:center;">AUG 02</div>
<div class="t" style="left:1122px;top:237.6px;width:93px;height:42.400000000000006px;font-size:13px;font-weight:bold;-webkit-text-stroke:0.25px currentColor;color:#111;justify-content:center;line-height:16px;text-align:center;">CHG</div>
<div class="t" style="left:1215px;top:196px;width:57px;height:86px;font-size:13px;font-weight:bold;-webkit-text-stroke:0.25px currentColor;color:#111;justify-content:center;line-height:16px;text-align:center;">CHG<br>CHART</div>
<div class="t" style="left:705px;top:281.4px;width:84px;height:25.600000000000023px;font-size:14.25px;color:#1e1e1e;justify-content:center;">0.000</div>
<div class="t" style="left:789px;top:281.4px;width:55px;height:25.600000000000023px;font-size:14.25px;color:#1e1e1e;justify-content:center;">WAF2</div>
<div class="t" style="left:844px;top:281.4px;width:92px;height:25.600000000000023px;font-size:14.25px;color:#1e1e1e;justify-content:flex-end;padding-right:5.5px;">1,000</div>
<div class="t" style="left:936px;top:281.4px;width:93px;height:25.600000000000023px;font-size:14.25px;color:#1e1e1e;justify-content:flex-end;padding-right:5.5px;">5,100</div>
<div class="t" style="left:1029px;top:281.4px;width:93px;height:25.600000000000023px;font-size:14.25px;color:#1e1e1e;justify-content:flex-end;padding-right:5.5px;">6,100</div>
<div class="t" style="left:1122px;top:281.4px;width:93px;height:25.600000000000023px;font-size:14.25px;color:#4f9040;justify-content:flex-end;padding-right:5.5px;">1,000</div>
<div style="left:1244px;top:290.09999999999997px;width:11px;height:9.8px;background:#2e7d1c"></div>
<div class="t" style="left:705px;top:307.0px;width:84px;height:25.599999999999966px;font-size:14.25px;color:#1e1e1e;justify-content:center;">0.000</div>
<div class="t" style="left:789px;top:307.0px;width:55px;height:25.599999999999966px;font-size:14.25px;color:#1e1e1e;justify-content:center;">WAG2</div>
<div class="t" style="left:844px;top:307.0px;width:92px;height:25.599999999999966px;font-size:14.25px;color:#1e1e1e;justify-content:flex-end;padding-right:5.5px;">1,000</div>
<div class="t" style="left:936px;top:307.0px;width:93px;height:25.599999999999966px;font-size:14.25px;color:#1e1e1e;justify-content:flex-end;padding-right:5.5px;">5,100</div>
<div class="t" style="left:1029px;top:307.0px;width:93px;height:25.599999999999966px;font-size:14.25px;color:#1e1e1e;justify-content:flex-end;padding-right:5.5px;">6,100</div>
<div class="t" style="left:1122px;top:307.0px;width:93px;height:25.599999999999966px;font-size:14.25px;color:#4f9040;justify-content:flex-end;padding-right:5.5px;">1,000</div>
<div style="left:1244px;top:315.7px;width:11px;height:9.8px;background:#2e7d1c"></div>
<div class="t" style="left:705px;top:332.59999999999997px;width:84px;height:25.600000000000023px;font-size:14.25px;font-weight:bold;-webkit-text-stroke:0.25px currentColor;color:#111;justify-content:center;">0.000</div>
<div class="t" style="left:789px;top:332.59999999999997px;width:55px;height:25.600000000000023px;font-size:14.25px;font-weight:bold;-webkit-text-stroke:0.25px currentColor;color:#111;justify-content:center;">WAH2</div>
<div class="t" style="left:844px;top:332.59999999999997px;width:92px;height:25.600000000000023px;font-size:14.25px;font-weight:bold;-webkit-text-stroke:0.25px currentColor;color:#111;justify-content:flex-end;padding-right:5.5px;">1,000</div>
<div class="t" style="left:936px;top:332.59999999999997px;width:93px;height:25.600000000000023px;font-size:14.25px;font-weight:bold;-webkit-text-stroke:0.25px currentColor;color:#111;justify-content:flex-end;padding-right:5.5px;">5,100</div>
<div class="t" style="left:1029px;top:332.59999999999997px;width:93px;height:25.600000000000023px;font-size:14.25px;font-weight:bold;-webkit-text-stroke:0.25px currentColor;color:#111;justify-content:flex-end;padding-right:5.5px;">6,100</div>
<div class="t" style="left:1122px;top:332.59999999999997px;width:93px;height:25.600000000000023px;font-size:14.25px;font-weight:bold;-webkit-text-stroke:0.25px currentColor;color:#3f8030;justify-content:flex-end;padding-right:5.5px;">1,000</div>
<div style="left:1244px;top:341.29999999999995px;width:11px;height:9.8px;background:#2e7d1c"></div>
<div class="t" style="left:705px;top:358.2px;width:84px;height:25.599999999999966px;font-size:14.25px;color:#1e1e1e;justify-content:center;">-0.100</div>
<div class="t" style="left:789px;top:358.2px;width:55px;height:25.599999999999966px;font-size:14.25px;color:#1e1e1e;justify-content:center;">WAV1</div>
<div class="t" style="left:844px;top:358.2px;width:92px;height:25.599999999999966px;font-size:14.25px;color:#1e1e1e;justify-content:flex-end;padding-right:5.5px;">0</div>
<div class="t" style="left:936px;top:358.2px;width:93px;height:25.599999999999966px;font-size:14.25px;color:#1e1e1e;justify-content:flex-end;padding-right:5.5px;">10,100</div>
<div class="t" style="left:1029px;top:358.2px;width:93px;height:25.599999999999966px;font-size:14.25px;color:#1e1e1e;justify-content:flex-end;padding-right:5.5px;">10,100</div>
<div class="t" style="left:705px;top:383.79999999999995px;width:84px;height:25.600000000000023px;font-size:14.25px;color:#1e1e1e;justify-content:center;">-0.100</div>
<div class="t" style="left:789px;top:383.79999999999995px;width:55px;height:25.600000000000023px;font-size:14.25px;color:#1e1e1e;justify-content:center;">WAX1</div>
<div class="t" style="left:844px;top:383.79999999999995px;width:92px;height:25.600000000000023px;font-size:14.25px;color:#1e1e1e;justify-content:flex-end;padding-right:5.5px;">0</div>
<div class="t" style="left:936px;top:383.79999999999995px;width:93px;height:25.600000000000023px;font-size:14.25px;color:#1e1e1e;justify-content:flex-end;padding-right:5.5px;">10,100</div>
<div class="t" style="left:1029px;top:383.79999999999995px;width:93px;height:25.600000000000023px;font-size:14.25px;color:#1e1e1e;justify-content:flex-end;padding-right:5.5px;">10,100</div>
<div class="t" style="left:705px;top:409.4px;width:84px;height:25.600000000000023px;font-size:14.25px;color:#1e1e1e;justify-content:center;">-0.100</div>
<div class="t" style="left:789px;top:409.4px;width:55px;height:25.600000000000023px;font-size:14.25px;color:#1e1e1e;justify-content:center;">WAZ1</div>
<div class="t" style="left:844px;top:409.4px;width:92px;height:25.600000000000023px;font-size:14.25px;color:#1e1e1e;justify-content:flex-end;padding-right:5.5px;">0</div>
<div class="t" style="left:936px;top:409.4px;width:93px;height:25.600000000000023px;font-size:14.25px;color:#1e1e1e;justify-content:flex-end;padding-right:5.5px;">10,100</div>
<div class="t" style="left:1029px;top:409.4px;width:93px;height:25.600000000000023px;font-size:14.25px;color:#1e1e1e;justify-content:flex-end;padding-right:5.5px;">10,100</div>
<div class="t" style="left:705px;top:435.0px;width:84px;height:25.600000000000023px;font-size:14.25px;color:#1e1e1e;justify-content:center;">0.000</div>
<div class="t" style="left:789px;top:435.0px;width:55px;height:25.600000000000023px;font-size:14.25px;color:#1e1e1e;justify-content:center;">WAZ1</div>
<div class="t" style="left:844px;top:435.0px;width:92px;height:25.600000000000023px;font-size:14.25px;color:#1e1e1e;justify-content:flex-end;padding-right:5.5px;">0</div>
<div class="t" style="left:936px;top:435.0px;width:93px;height:25.600000000000023px;font-size:14.25px;color:#1e1e1e;justify-content:flex-end;padding-right:5.5px;">9,900</div>
<div class="t" style="left:1029px;top:435.0px;width:93px;height:25.600000000000023px;font-size:14.25px;color:#1e1e1e;justify-content:flex-end;padding-right:5.5px;">9,900</div>
<div class="t" style="left:705px;top:460.6px;width:84px;height:25.599999999999966px;font-size:14.25px;color:#1e1e1e;justify-content:center;">0.000</div>
<div class="t" style="left:789px;top:460.6px;width:55px;height:25.599999999999966px;font-size:14.25px;color:#1e1e1e;justify-content:center;">WAV1</div>
<div class="t" style="left:844px;top:460.6px;width:92px;height:25.599999999999966px;font-size:14.25px;color:#1e1e1e;justify-content:flex-end;padding-right:5.5px;">0</div>
<div class="t" style="left:936px;top:460.6px;width:93px;height:25.599999999999966px;font-size:14.25px;color:#1e1e1e;justify-content:flex-end;padding-right:5.5px;">6,200</div>
<div class="t" style="left:1029px;top:460.6px;width:93px;height:25.599999999999966px;font-size:14.25px;color:#1e1e1e;justify-content:flex-end;padding-right:5.5px;">6,200</div>
<div class="t" style="left:705px;top:486.2px;width:84px;height:25.599999999999966px;font-size:14.25px;color:#1e1e1e;justify-content:center;">0.000</div>
<div class="t" style="left:789px;top:486.2px;width:55px;height:25.599999999999966px;font-size:14.25px;color:#1e1e1e;justify-content:center;">WAX1</div>
<div class="t" style="left:844px;top:486.2px;width:92px;height:25.599999999999966px;font-size:14.25px;color:#1e1e1e;justify-content:flex-end;padding-right:5.5px;">0</div>
<div class="t" style="left:936px;top:486.2px;width:93px;height:25.599999999999966px;font-size:14.25px;color:#1e1e1e;justify-content:flex-end;padding-right:5.5px;">6,200</div>
<div class="t" style="left:1029px;top:486.2px;width:93px;height:25.599999999999966px;font-size:14.25px;color:#1e1e1e;justify-content:flex-end;padding-right:5.5px;">6,200</div>
<div class="t" style="left:705px;top:511.79999999999995px;width:84px;height:25.600000000000023px;font-size:14.25px;font-weight:bold;-webkit-text-stroke:0.25px currentColor;color:#111;justify-content:center;">0.000</div>
<div class="t" style="left:789px;top:511.79999999999995px;width:55px;height:25.600000000000023px;font-size:14.25px;font-weight:bold;-webkit-text-stroke:0.25px currentColor;color:#111;justify-content:center;">WAJ2</div>
<div class="t" style="left:844px;top:511.79999999999995px;width:92px;height:25.600000000000023px;font-size:14.25px;font-weight:bold;-webkit-text-stroke:0.25px currentColor;color:#111;justify-content:flex-end;padding-right:5.5px;">0</div>
<div class="t" style="left:936px;top:511.79999999999995px;width:93px;height:25.600000000000023px;font-size:14.25px;font-weight:bold;-webkit-text-stroke:0.25px currentColor;color:#111;justify-content:flex-end;padding-right:5.5px;">5,100</div>
<div class="t" style="left:1029px;top:511.79999999999995px;width:93px;height:25.600000000000023px;font-size:14.25px;font-weight:bold;-webkit-text-stroke:0.25px currentColor;color:#111;justify-content:flex-end;padding-right:5.5px;">5,100</div>
<div class="t" style="left:705px;top:537.4px;width:84px;height:25.600000000000023px;font-size:14.25px;font-weight:bold;-webkit-text-stroke:0.25px currentColor;color:#111;justify-content:center;">0.000</div>
<div class="t" style="left:789px;top:537.4px;width:55px;height:25.600000000000023px;font-size:14.25px;font-weight:bold;-webkit-text-stroke:0.25px currentColor;color:#111;justify-content:center;">WAK2</div>
<div class="t" style="left:844px;top:537.4px;width:92px;height:25.600000000000023px;font-size:14.25px;font-weight:bold;-webkit-text-stroke:0.25px currentColor;color:#111;justify-content:flex-end;padding-right:5.5px;">0</div>
<div class="t" style="left:936px;top:537.4px;width:93px;height:25.600000000000023px;font-size:14.25px;font-weight:bold;-webkit-text-stroke:0.25px currentColor;color:#111;justify-content:flex-end;padding-right:5.5px;">5,100</div>
<div class="t" style="left:1029px;top:537.4px;width:93px;height:25.600000000000023px;font-size:14.25px;font-weight:bold;-webkit-text-stroke:0.25px currentColor;color:#111;justify-content:flex-end;padding-right:5.5px;">5,100</div>
<div class="t" style="left:705px;top:563.0px;width:84px;height:25.600000000000023px;font-size:14.25px;font-weight:bold;-webkit-text-stroke:0.25px currentColor;color:#111;justify-content:center;">0.000</div>
<div class="t" style="left:789px;top:563.0px;width:55px;height:25.600000000000023px;font-size:14.25px;font-weight:bold;-webkit-text-stroke:0.25px currentColor;color:#111;justify-content:center;">WAM2</div>
<div class="t" style="left:844px;top:563.0px;width:92px;height:25.600000000000023px;font-size:14.25px;font-weight:bold;-webkit-text-stroke:0.25px currentColor;color:#111;justify-content:flex-end;padding-right:5.5px;">0</div>
<div class="t" style="left:936px;top:563.0px;width:93px;height:25.600000000000023px;font-size:14.25px;font-weight:bold;-webkit-text-stroke:0.25px currentColor;color:#111;justify-content:flex-end;padding-right:5.5px;">5,100</div>
<div class="t" style="left:1029px;top:563.0px;width:93px;height:25.600000000000023px;font-size:14.25px;font-weight:bold;-webkit-text-stroke:0.25px currentColor;color:#111;justify-content:flex-end;padding-right:5.5px;">5,100</div>
<div class="t" style="left:705px;top:588.6px;width:84px;height:25.600000000000023px;font-size:14.25px;color:#1e1e1e;justify-content:center;">-1.000</div>
<div class="t" style="left:789px;top:588.6px;width:55px;height:25.600000000000023px;font-size:14.25px;color:#1e1e1e;justify-content:center;">WAU1</div>
<div class="t" style="left:844px;top:588.6px;width:92px;height:25.600000000000023px;font-size:14.25px;color:#1e1e1e;justify-content:flex-end;padding-right:5.5px;">0</div>
<div class="t" style="left:936px;top:588.6px;width:93px;height:25.600000000000023px;font-size:14.25px;color:#1e1e1e;justify-content:flex-end;padding-right:5.5px;">4,800</div>
<div class="t" style="left:1029px;top:588.6px;width:93px;height:25.600000000000023px;font-size:14.25px;color:#1e1e1e;justify-content:flex-end;padding-right:5.5px;">4,800</div>
<div class="t" style="left:705px;top:614.2px;width:84px;height:25.59999999999991px;font-size:14.25px;color:#1e1e1e;justify-content:center;">-1.000</div>
<div class="t" style="left:789px;top:614.2px;width:55px;height:25.59999999999991px;font-size:14.25px;color:#1e1e1e;justify-content:center;">WAV1</div>
<div class="t" style="left:844px;top:614.2px;width:92px;height:25.59999999999991px;font-size:14.25px;color:#1e1e1e;justify-content:flex-end;padding-right:5.5px;">0</div>
<div class="t" style="left:936px;top:614.2px;width:93px;height:25.59999999999991px;font-size:14.25px;color:#1e1e1e;justify-content:flex-end;padding-right:5.5px;">4,800</div>
<div class="t" style="left:1029px;top:614.2px;width:93px;height:25.59999999999991px;font-size:14.25px;color:#1e1e1e;justify-content:flex-end;padding-right:5.5px;">4,800</div>
<div class="t" style="left:705px;top:639.8px;width:84px;height:25.600000000000023px;font-size:14.25px;color:#1e1e1e;justify-content:center;">-1.000</div>
<div class="t" style="left:789px;top:639.8px;width:55px;height:25.600000000000023px;font-size:14.25px;color:#1e1e1e;justify-content:center;">WAX1</div>
<div class="t" style="left:844px;top:639.8px;width:92px;height:25.600000000000023px;font-size:14.25px;color:#1e1e1e;justify-content:flex-end;padding-right:5.5px;">0</div>
<div class="t" style="left:936px;top:639.8px;width:93px;height:25.600000000000023px;font-size:14.25px;color:#1e1e1e;justify-content:flex-end;padding-right:5.5px;">4,800</div>
<div class="t" style="left:1029px;top:639.8px;width:93px;height:25.600000000000023px;font-size:14.25px;color:#1e1e1e;justify-content:flex-end;padding-right:5.5px;">4,800</div>
<div class="t" style="left:705px;top:665.4px;width:84px;height:25.600000000000023px;font-size:14.25px;color:#1e1e1e;justify-content:center;">-1.000</div>
<div class="t" style="left:789px;top:665.4px;width:55px;height:25.600000000000023px;font-size:14.25px;color:#1e1e1e;justify-content:center;">WAZ1</div>
<div class="t" style="left:844px;top:665.4px;width:92px;height:25.600000000000023px;font-size:14.25px;color:#1e1e1e;justify-content:flex-end;padding-right:5.5px;">0</div>
<div class="t" style="left:936px;top:665.4px;width:93px;height:25.600000000000023px;font-size:14.25px;color:#1e1e1e;justify-content:flex-end;padding-right:5.5px;">4,800</div>
<div class="t" style="left:1029px;top:665.4px;width:93px;height:25.600000000000023px;font-size:14.25px;color:#1e1e1e;justify-content:flex-end;padding-right:5.5px;">4,800</div>
<div class="t" style="left:705px;top:691.0px;width:84px;height:25.600000000000023px;font-size:14.25px;color:#1e1e1e;justify-content:center;">0.000</div>
<div class="t" style="left:789px;top:691.0px;width:55px;height:25.600000000000023px;font-size:14.25px;color:#1e1e1e;justify-content:center;">WAN2</div>
<div class="t" style="left:844px;top:691.0px;width:92px;height:25.600000000000023px;font-size:14.25px;color:#1e1e1e;justify-content:flex-end;padding-right:5.5px;">0</div>
<div class="t" style="left:936px;top:691.0px;width:93px;height:25.600000000000023px;font-size:14.25px;color:#1e1e1e;justify-content:flex-end;padding-right:5.5px;">4,000</div>
<div class="t" style="left:1029px;top:691.0px;width:93px;height:25.600000000000023px;font-size:14.25px;color:#1e1e1e;justify-content:flex-end;padding-right:5.5px;">4,000</div>
<div class="t" style="left:705px;top:716.6px;width:84px;height:25.600000000000023px;font-size:14.25px;color:#1e1e1e;justify-content:center;">0.000</div>
<div class="t" style="left:789px;top:716.6px;width:55px;height:25.600000000000023px;font-size:14.25px;color:#1e1e1e;justify-content:center;">WAQ2</div>
<div class="t" style="left:844px;top:716.6px;width:92px;height:25.600000000000023px;font-size:14.25px;color:#1e1e1e;justify-content:flex-end;padding-right:5.5px;">0</div>
<div class="t" style="left:936px;top:716.6px;width:93px;height:25.600000000000023px;font-size:14.25px;color:#1e1e1e;justify-content:flex-end;padding-right:5.5px;">4,000</div>
<div class="t" style="left:1029px;top:716.6px;width:93px;height:25.600000000000023px;font-size:14.25px;color:#1e1e1e;justify-content:flex-end;padding-right:5.5px;">4,000</div>
<div style="left:1277.5px;top:0px;width:1px;height:720px;background:#d6d6da"></div>
</div></body></html>
